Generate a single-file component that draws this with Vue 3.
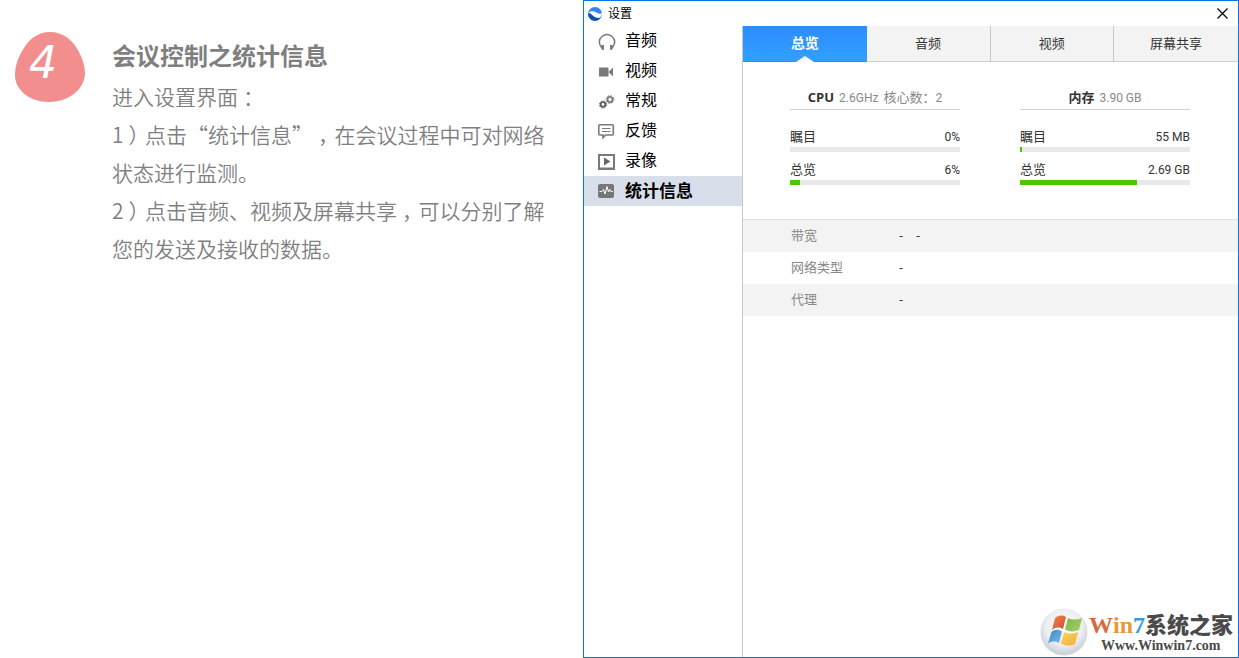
<script setup>
import { ref } from 'vue'

const navItems = [
  { id: 'audio', label: '音频' },
  { id: 'video', label: '视频' },
  { id: 'general', label: '常规' },
  { id: 'feedback', label: '反馈' },
  { id: 'record', label: '录像' },
  { id: 'stats', label: '统计信息' },
]
const activeNav = ref('stats')

const tabs = ['总览', '音频', '视频', '屏幕共享']
const activeTab = ref('总览')

const groups = [
  {
    name: 'CPU',
    frequency: '2.6GHz',
    coreLabel: '核心数：',
    cores: '2',
    meters: [
      { label: '瞩目', value: '0%', percent: 0 },
      { label: '总览', value: '6%', percent: 6 },
    ],
  },
  {
    name: '内存',
    frequency: '3.90 GB',
    meters: [
      { label: '瞩目', value: '55 MB', percent: 1 },
      { label: '总览', value: '2.69 GB', percent: 69 },
    ],
  },
]

const rows = [
  { label: '带宽', values: ['-', '-'] },
  { label: '网络类型', values: ['-'] },
  { label: '代理', values: ['-'] },
]
</script>

<template>
  <main class="page">
    <section class="guide">
      <div class="badge">
        <svg class="blob" viewBox="0 0 70 70" aria-hidden="true">
          <path d="M35 0C48 0 58 8 64 20C68 28 70 35 70 42C69 58 53 70 34 70C16 70 0 59 0 43C0 34 3 25 9 16C15 6 24 0 35 0Z" fill="#f28e8e" />
        </svg>
        <span class="number">4</span>
      </div>
      <div class="copy">
        <h1>会议控制之统计信息</h1>
        <p>进入设置界面<span class="mid">：</span></p>
        <p>1<span class="mid">）</span>点击“统计信息”<span class="mid">，</span>在会议过程中可对网络状态进行监测。</p>
        <p>2<span class="mid">）</span>点击音频、视频及屏幕共享<span class="mid">，</span>可以分别了解您的发送及接收的数据。</p>
      </div>
    </section>

    <section class="window">
      <header class="titlebar">
        <svg class="logo" viewBox="0 0 14 14" aria-hidden="true">
          <circle cx="7" cy="7" r="7" fill="#2f86f6" />
          <path d="M0.200 5.800C2.500 3.600 5.500 3.800 8 5.200C10 6.400 12 7.300 13.900 6.300C13.800 8.500 13 10 11.500 10.800C8.500 11 6.500 10 4.800 8.500C3.200 7 1.800 6 0.200 5.800Z" fill="#fff" />
          <path d="M0.100 6.300C2 6.200 3.500 7.700 5 9C7 10.700 9.300 11.500 12.300 11.200C9.500 14.500 4.500 14.300 2 11.500C0.700 10 0.100 8.300 0.100 6.300Z" fill="#1450a8" />
        </svg>
        <span class="title">设置</span>
        <button class="close" type="button" aria-label="关闭">
          <svg viewBox="0 0 11 11" aria-hidden="true"><path d="M0.500 0.500L10.500 10.500M10.500 0.500L0.500 10.500" stroke="#000" stroke-width="1.200" /></svg>
        </button>
      </header>

      <div class="body">
        <nav class="sidebar">
          <button
            v-for="item in navItems"
            :key="item.id"
            type="button"
            :class="['nav-item', { active: item.id === activeNav }]"
            @click="activeNav = item.id"
          >
            <svg class="nav-icon" viewBox="0 0 18 18" aria-hidden="true">
              <g v-if="item.id === 'audio'">
                <path d="M2.800 14.500C0.800 11 1 7 4 4.500C7 2 11 2 14 4.500C17 7 17.200 11 15.200 14.500" fill="none" stroke="#7a7a7a" stroke-width="1.500" />
                <path d="M2.500 13.500L6 12.800V18H4.500L2.500 15.500ZM15.500 13.500L12 12.800V18H13.500L15.500 15.500Z" fill="#7a7a7a" />
              </g>
              <g v-else-if="item.id === 'video'" fill="#7a7a7a">
                <rect x="1" y="5.500" width="9.500" height="9" rx="0.500" />
                <path d="M10.500 10L15 5.500V14.500Z" />
              </g>
              <g v-else-if="item.id === 'general'" fill="none" stroke="#606060">
                <circle cx="5" cy="12.500" r="2.300" stroke-width="1.800" />
                <circle cx="5" cy="12.500" r="3.600" stroke-width="1" stroke-dasharray="1.500 1.330" />
                <g stroke="#7a7a7a">
                  <circle cx="12" cy="7.500" r="2.600" stroke-width="1.800" />
                  <circle cx="12" cy="7.500" r="3.900" stroke-width="1" stroke-dasharray="1.600 1.463" />
                </g>
              </g>
              <g v-else-if="item.id === 'feedback'">
                <path d="M1.800 2.800H14.300Q15.300 2.800 15.300 3.800V12Q15.300 13 14.300 13H7.500L5 15.700V13H1.800Q0.800 13 0.800 12V3.800Q0.800 2.800 1.800 2.800Z" fill="none" stroke="#7a7a7a" stroke-width="1.600" />
                <path d="M4 6.500H12.500M4 9.500H12.500" stroke="#7a7a7a" stroke-width="1" />
              </g>
              <g v-else-if="item.id === 'record'">
                <path d="M0 2H17V18H0ZM2 4V15.500H15V4Z" fill="#7a7a7a" fill-rule="evenodd" />
                <path d="M6 5.500L12.500 9.500L6 13.500Z" fill="#666" />
              </g>
              <g v-else>
                <rect x="0" y="2" width="16" height="14" rx="2" fill="#777" />
                <path d="M1.500 9.500H4L5.500 7.500L7 12L9 4.500L10.500 10L12 7.500L13 9.500H14.800" fill="none" stroke="#fff" stroke-width="1" />
              </g>
            </svg>
            <span class="nav-label">{{ item.label }}</span>
          </button>
        </nav>

        <div class="content">
          <div class="tabs" role="tablist">
            <button
              v-for="tab in tabs"
              :key="tab"
              type="button"
              role="tab"
              :aria-selected="tab === activeTab"
              :class="['tab', { active: tab === activeTab }]"
              @click="activeTab = tab"
            >
              {{ tab }}
            </button>
          </div>

          <div class="usage">
            <section v-for="group in groups" :key="group.name" class="group">
              <h2>
                <strong>{{ group.name }}</strong>
                <span class="figure">{{ group.frequency }}</span>
                <span v-if="group.cores">{{ group.coreLabel }}<span class="figure">{{ group.cores }}</span></span>
              </h2>
              <div v-for="meter in group.meters" :key="meter.label" class="meter">
                <div class="meter-text">
                  <span>{{ meter.label }}</span>
                  <span class="amount">{{ meter.value }}</span>
                </div>
                <div class="track" role="progressbar" :aria-label="meter.label" :aria-valuenow="meter.percent">
                  <div class="fill" :style="{ width: meter.percent + '%' }"></div>
                </div>
              </div>
            </section>
          </div>

          <table class="network">
            <tbody>
              <tr v-for="row in rows" :key="row.label">
                <th scope="row">{{ row.label }}</th>
                <td><span v-for="(value, i) in row.values" :key="i" class="dash">{{ value }}</span></td>
              </tr>
            </tbody>
          </table>
        </div>
      </div>

      <div class="watermark">
        <svg class="orb" viewBox="0 0 48 48" aria-hidden="true">
          <defs>
            <radialGradient id="orb" cx="50%" cy="40%" r="55%">
              <stop offset="0" stop-color="#fff" />
              <stop offset="0.700" stop-color="#eceef1" />
              <stop offset="1" stop-color="#cdd3da" />
            </radialGradient>
            <linearGradient id="red" x2="1" y2="1"><stop stop-color="#f08a50" /><stop offset="1" stop-color="#d2452c" /></linearGradient>
            <linearGradient id="green" x2="1" y2="1"><stop stop-color="#7db84a" /><stop offset="1" stop-color="#a5cf62" /></linearGradient>
            <linearGradient id="blue" x2="1" y2="1"><stop stop-color="#3b86c8" /><stop offset="1" stop-color="#79bdeb" /></linearGradient>
            <linearGradient id="yellow" x2="1" y2="1"><stop stop-color="#fbd45c" /><stop offset="1" stop-color="#f3ae35" /></linearGradient>
          </defs>
          <circle cx="24" cy="24" r="23.500" fill="url(#orb)" />
          <path d="M15 10C19 7 22 7 26 9L23 21C19 19 16 19 12 22Z" fill="url(#red)" />
          <path d="M28 10C32 12 37 12 42 10L39 22C34 24 29 24 25 21.500Z" fill="url(#green)" />
          <path d="M11.500 24C15 21 18 21 22 23.500L19 35C15 33 12 33 8 35.500Z" fill="url(#blue)" />
          <path d="M24 24C29 26 33 26 38 24L35 36C31 38.500 25 38 21 35.500Z" fill="url(#yellow)" />
        </svg>
        <div class="brand">
          <div class="brand-name"><span class="w">W</span><span class="in">in</span><span class="seven">7</span><span class="cn">系统之家</span></div>
          <div class="brand-url">Www.Winwin7.com</div>
        </div>
      </div>
    </section>
  </main>
</template>

<style>
body {
  margin: 0;
  background: #fff;
}
</style>

<style scoped>
.page {
  display: grid;
  grid-template-columns: 583fr 656fr;
  min-height: 100vh;
  font-family: "Open Sans", "Noto Sans CJK SC", sans-serif;
}
button {
  margin: 0;
  padding: 0;
  border: 0;
  background: none;
  font: inherit;
  color: inherit;
}
.guide {
  display: flex;
  align-items: flex-start;
  gap: 27px;
  padding: 32px 32px 0 15px;
}
.badge {
  display: grid;
  flex: none;
  width: 70px;
}
.blob,
.number {
  grid-area: 1 / 1;
}
.blob {
  width: 70px;
  height: 70px;
}
.number {
  padding-left: 14px;
  color: #fff;
  font-family: "DejaVu Sans", sans-serif;
  font-size: 44px;
  font-style: italic;
  line-height: 61px;
}
.copy {
  color: #7f7f7f;
  font-family: "Noto Sans CJK SC", sans-serif;
  text-spacing-trim: space-all;
}
.copy h1 {
  margin: 0 0 -1px;
  font-size: 24px;
  line-height: 46px;
}
.copy p {
  margin: 0;
  font-size: 21px;
  font-weight: 350;
  line-height: 38px;
}
.mid {
  padding: 0 6px 0 5px;
  font-feature-settings: "halt";
}
.window {
  display: flex;
  flex-direction: column;
  position: relative;
  border: 1px solid #0078e7;
  box-sizing: border-box;
}
.titlebar {
  display: flex;
  align-items: center;
  height: 25px;
  padding: 0 10px 0 4px;
  font-size: 12px;
}
.logo {
  width: 14px;
  height: 14px;
  margin-right: 6px;
}
.title {
  flex: 1;
  padding-bottom: 2px;
  color: #000;
}
.close svg {
  display: block;
  width: 11px;
  height: 11px;
}
.body {
  display: flex;
  flex: 1;
}
.sidebar {
  flex: none;
  width: 158px;
  border-right: 1px solid #c8c8c8;
}
.nav-item {
  display: flex;
  align-items: center;
  gap: 9px;
  width: 100%;
  height: 30px;
  padding-left: 14px;
  color: #000;
  font-size: 16px;
}
.nav-item.active {
  background: #d9dfea;
  font-size: 17px;
  font-weight: 700;
}
.nav-label {
  padding-bottom: 4px;
}
.nav-icon {
  width: 18px;
  height: 18px;
}
.content {
  flex: 1;
  min-width: 0;
}
.tabs {
  display: grid;
  grid-template-columns: repeat(4, 1fr);
  height: 36px;
}
.tab {
  position: relative;
  padding-bottom: 3px;
  border-right: 1px solid #c8c8c8;
  border-bottom: 1px solid #cfcfcf;
  background: #f3f3f3;
  color: #333;
  font-size: 13px;
}
.tab:last-child {
  border-right: 0;
}
.tab.active {
  border-right: 0;
  border-bottom-color: #2d8cff;
  background: linear-gradient(#2d8cff, #30a0ff);
  color: #fff;
  font-size: 14px;
  font-weight: 700;
}
.tab.active::after {
  content: "";
  position: absolute;
  bottom: -1px;
  left: 50%;
  margin-left: -9px;
  border: 9px solid transparent;
  border-top: 0;
  border-bottom: 6px solid #fff;
}
.usage {
  display: grid;
  grid-template-columns: 1fr 1fr;
  gap: 60px;
  padding: 24px 48px 34px 47px;
}
.group h2 {
  display: flex;
  align-items: baseline;
  justify-content: center;
  gap: 5px;
  height: 23px;
  margin: 0 0 17px;
  border-bottom: 1px solid #cfcfcf;
  color: #888;
  font-size: 13px;
  font-weight: 400;
  line-height: 23px;
}
.group strong {
  color: #333;
}
.group .figure {
  font-family: Roboto, sans-serif;
  font-size: 12px;
}
.meter + .meter {
  margin-top: 8px;
}
.meter-text {
  display: flex;
  justify-content: space-between;
  height: 20px;
  color: #333;
  font-size: 13px;
  line-height: 18px;
}
.meter-text .amount {
  font-family: Roboto, sans-serif;
  font-size: 12px;
  line-height: 21px;
}
.track {
  height: 5px;
  background: #e9e9e9;
}
.fill {
  height: 100%;
  background: #4cc800;
}
.network {
  width: 100%;
  border-top: 1px solid #ddd;
  border-spacing: 0;
  font-size: 13px;
}
.network tr {
  height: 32px;
}
.network tr:nth-child(odd) {
  background: #f3f3f3;
}
.network th {
  width: 108px;
  padding: 0 0 3px 48px;
  color: #888;
  font-weight: 400;
  text-align: left;
}
.network td {
  padding: 0 0 2px;
  color: #333;
}
.dash {
  display: inline-block;
  width: 17px;
}
.watermark {
  display: flex;
  align-items: center;
  gap: 1px;
  position: absolute;
  right: 5px;
  bottom: 1px;
}
.orb {
  width: 48px;
  height: 48px;
}
.brand {
  color: #4a4a4a;
  font-family: "Liberation Serif", serif;
  font-weight: 700;
}
.brand-name {
  display: flex;
  align-items: baseline;
  font-size: 24px;
  line-height: 24px;
}
.w {
  color: #d9673f;
}
.in {
  color: #e8963c;
}
.seven {
  color: #3a9bd8;
}
.cn {
  font-family: "Noto Sans CJK SC", sans-serif;
  font-size: 22px;
  font-weight: 900;
}
.brand-url {
  padding-left: 12px;
  font-size: 14px;
  line-height: 17px;
}
</style>
